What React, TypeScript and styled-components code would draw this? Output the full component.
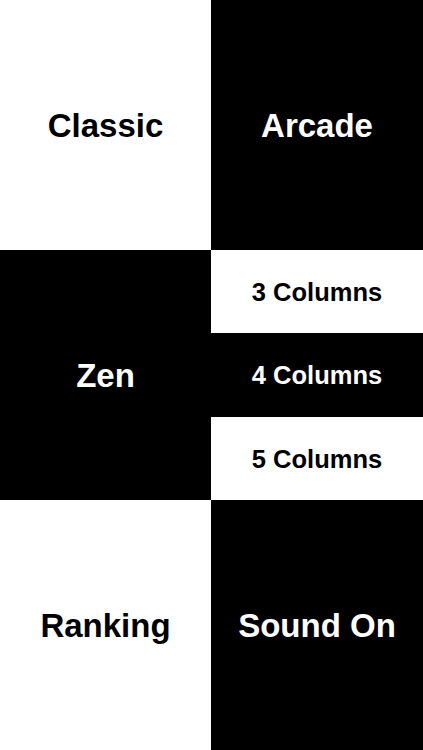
import React from "react";
import styled, { createGlobalStyle } from "styled-components";

const Global = createGlobalStyle`
  html, body { margin: 0; padding: 0; background: #fff; }
  #root { width: 423px; height: 750px; }
`;

const Board = styled.div`
  display: grid;
  grid-template-columns: 211px 212px;
  grid-template-rows: repeat(3, 250px);
  width: 423px;
  height: 750px;
  font-family: "Liberation Sans", Arial, Helvetica, sans-serif;
  font-weight: bold;
`;

const Tile = styled.div<{ $dark?: boolean; $size?: number }>`
  display: flex;
  align-items: center;
  justify-content: center;
  padding-top: 2px;
  box-sizing: border-box;
  background: ${(p) => (p.$dark ? "#000" : "#fff")};
  color: ${(p) => (p.$dark ? "#fff" : "#000")};
  font-size: ${(p) => p.$size ?? 33}px;
  cursor: pointer;
  user-select: none;
`;

const Stack = styled.div`
  display: grid;
  grid-template-rows: repeat(3, 1fr);
`;

export default function App() {
  return (
    <>
      <Global />
      <Board>
        <Tile>Classic</Tile>
        <Tile $dark>Arcade</Tile>
        <Tile $dark>Zen</Tile>
        <Stack>
          <Tile $size={25.5}>3 Columns</Tile>
          <Tile $dark $size={25.5}>4 Columns</Tile>
          <Tile $size={25.5}>5 Columns</Tile>
        </Stack>
        <Tile>Ranking</Tile>
        <Tile $dark>Sound On</Tile>
      </Board>
    </>
  );
}
